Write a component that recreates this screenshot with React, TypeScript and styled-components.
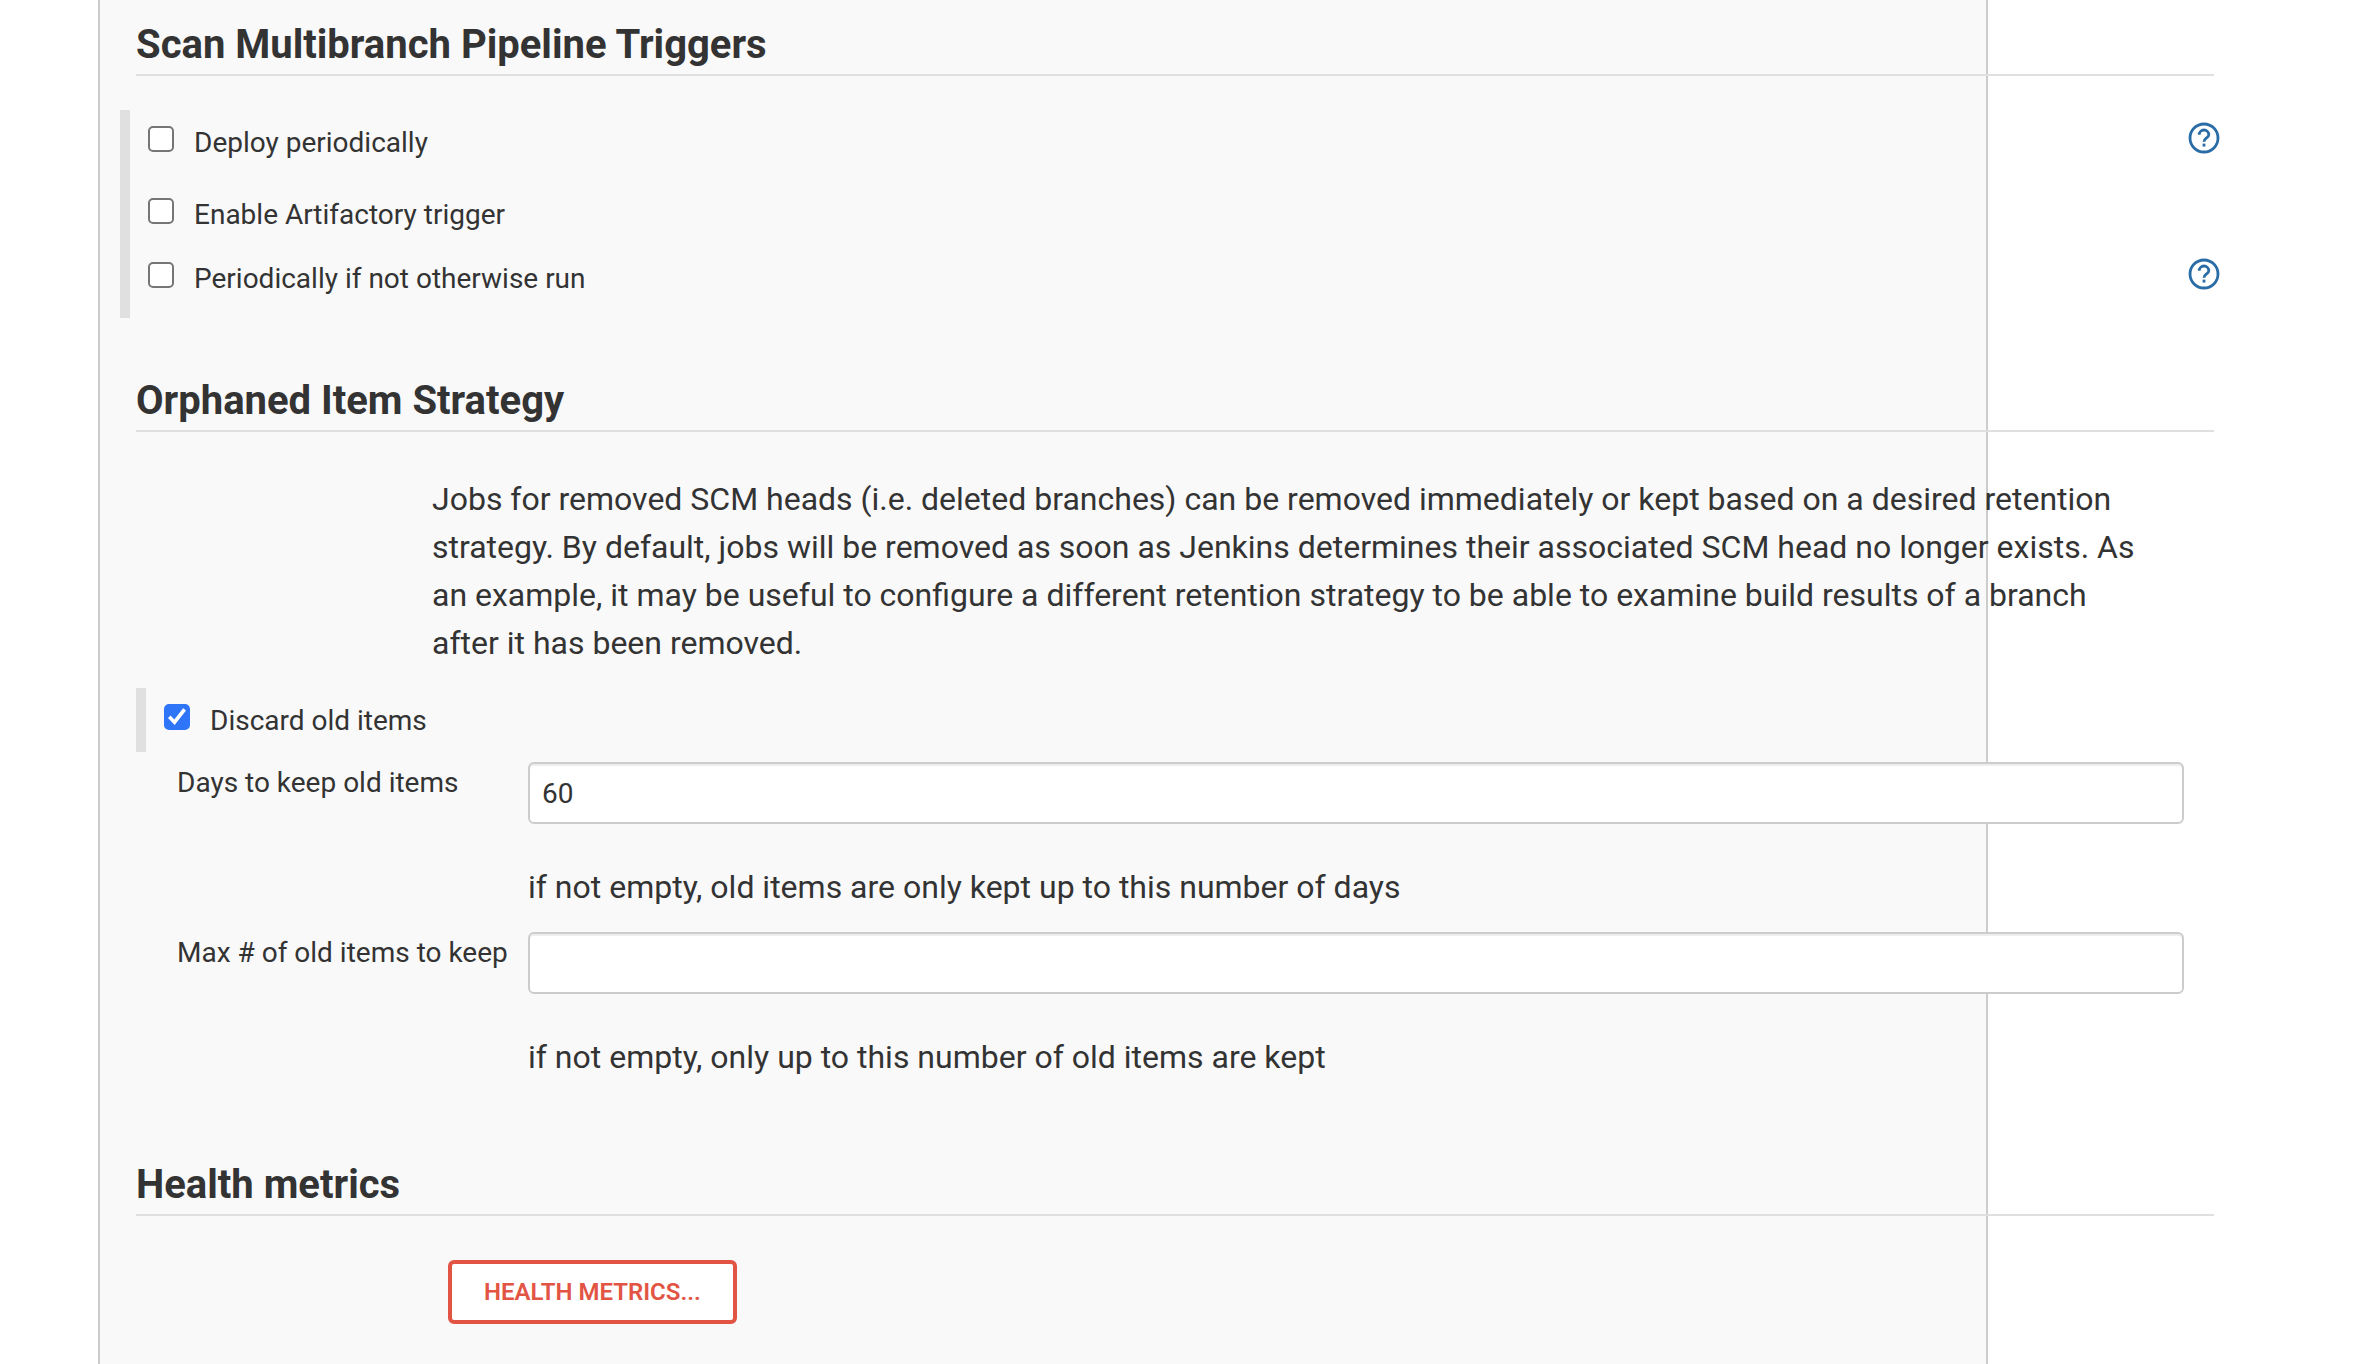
import React, { useId } from "react";
import styled, { createGlobalStyle } from "styled-components";

const GlobalStyle = createGlobalStyle`
  *, *::before, *::after { box-sizing: border-box; }
  body {
    margin: 0;
    background: #fff;
    color: #333;
    font-family: Roboto, "Liberation Sans", sans-serif;
    font-size: 28px;
    line-height: 34px;
  }
`;

const Page = styled.main`
  padding: 0 368px 0 98px;
`;

const Panel = styled.div`
  min-height: 100vh;
  padding: 21px 0 40px 36px;
  background: #f9f9f9;
  border: solid #ccc;
  border-width: 0 2px;
`;

/* The form is wider than its panel and runs past the right border. */
const Form = styled.form`
  margin-right: -228px;
`;

const Section = styled.section<{ $gap?: number }>`
  margin-bottom: ${(p) => p.$gap ?? 0}px;
`;

const Heading = styled.h2`
  margin: 0;
  padding-bottom: 5px;
  border-bottom: 2px solid #e0e0e0;
  font-size: 40px;
  font-weight: 700;
  line-height: 48px;
`;

const Group = styled.div<{ $outdent?: boolean }>`
  margin-top: ${(p) => (p.$outdent ? 34 : 21)}px;
  margin-left: ${(p) => (p.$outdent ? -16 : 0)}px;
  margin-right: -6px;
  padding-left: 18px;
  border-left: 10px solid #e0e0e0;
`;

const Row = styled.div<{ $tall?: boolean }>`
  display: flex;
  justify-content: space-between;
  align-items: flex-start;
  height: ${(p) => (p.$tall ? 72 : 64)}px;
  padding-top: 16px;
`;

const CheckLabel = styled.label`
  display: flex;
  align-items: flex-start;
  gap: 20px;
`;

const Checkbox = styled.input`
  appearance: none;
  display: grid;
  place-items: center;
  width: 26px;
  height: 26px;
  margin: 0;
  border: 2px solid #767676;
  border-radius: 5px;
  background: #fff;

  &:checked {
    border-color: #2f75f8;
    background: #2f75f8;
  }

  &:checked::before {
    content: "";
    width: 18px;
    height: 18px;
    background: #fff;
    clip-path: polygon(0 56%, 14% 42%, 35% 64%, 84% 2%, 100% 14%, 37% 94%);
  }
`;

const HelpButton = styled.button`
  display: block;
  margin: -4px 0 0;
  padding: 0;
  border: 0;
  background: none;
  color: #2a6ca6;
  cursor: pointer;

  svg { display: block; }
`;

const Description = styled.p`
  margin: 43px 64px 0 296px;
  font-size: 32px;
  line-height: 48px;
`;

const Fields = styled.div`
  display: grid;
  gap: 21px;
  margin: 10px 30px 0 41px;
`;

const FieldRow = styled.div`
  display: grid;
  grid-template-columns: 351px 1fr;
`;

const FieldLabel = styled.label`
  padding-top: 4px;
`;

const TextInput = styled.input`
  display: block;
  width: 100%;
  height: 62px;
  padding: 0 12px;
  border: 2px solid #ccc;
  border-radius: 6px;
  background: #fff;
  box-shadow: inset 0 2px 0 #eee;
  color: #333;
  font: inherit;
`;

const FieldHint = styled.p`
  margin: 39px 0 0;
  font-size: 32px;
  line-height: 48px;
`;

const OutlineButton = styled.button`
  display: block;
  height: 64px;
  margin: 44px 0 0 312px;
  padding: 0 32px;
  border: 4px solid #e25443;
  border-radius: 6px;
  background: #fff;
  color: #e25443;
  font: 600 24px/32px Roboto, "Liberation Sans", sans-serif;
  text-transform: uppercase;
  cursor: pointer;
`;

function Help({ topic }: { topic: string }) {
  return (
    <HelpButton type="button" aria-label={`Help for ${topic}`}>
      <svg width="32" height="32" viewBox="0 0 32 32" fill="none" stroke="currentColor" strokeWidth="2.8">
        <circle cx="16" cy="16" r="14" />
        <path d="M11.2 12.8a4.8 4.8 0 0 1 9.6 0c0 3.1-4.8 3.3-4.8 6.9" />
        <path d="M16 21.6v3" />
      </svg>
    </HelpButton>
  );
}

function CheckRow({ label, checked, help }: { label: string; checked?: boolean; help?: boolean }) {
  return (
    <Row $tall={help}>
      <CheckLabel>
        <Checkbox type="checkbox" defaultChecked={checked} />
        {label}
      </CheckLabel>
      {help && <Help topic={label} />}
    </Row>
  );
}

function Field({ label, value, hint }: { label: string; value?: string; hint: string }) {
  const id = useId();
  return (
    <FieldRow>
      <FieldLabel htmlFor={id}>{label}</FieldLabel>
      <div>
        <TextInput id={id} type="text" defaultValue={value} />
        <FieldHint>{hint}</FieldHint>
      </div>
    </FieldRow>
  );
}

export default function App() {
  return (
    <>
      <GlobalStyle />
      <Page>
        <Panel>
          <Form onSubmit={(e) => e.preventDefault()}>
            <Section $gap={59}>
              <Heading>Scan Multibranch Pipeline Triggers</Heading>
              <Group $outdent>
                <CheckRow label="Deploy periodically" help />
                <CheckRow label="Enable Artifactory trigger" />
                <CheckRow label="Periodically if not otherwise run" help />
              </Group>
            </Section>
            <Section $gap={80}>
              <Heading>Orphaned Item Strategy</Heading>
              <Description>
                Jobs for removed SCM heads (i.e. deleted branches) can be removed immediately or kept based on a
                desired retention strategy. By default, jobs will be removed as soon as Jenkins determines their
                associated SCM head no longer exists. As an example, it may be useful to configure a different
                retention strategy to be able to examine build results of a branch after it has been removed.
              </Description>
              <Group>
                <CheckRow label="Discard old items" checked />
              </Group>
              <Fields>
                <Field
                  label="Days to keep old items"
                  value="60"
                  hint="if not empty, old items are only kept up to this number of days"
                />
                <Field
                  label="Max # of old items to keep"
                  hint="if not empty, only up to this number of old items are kept"
                />
              </Fields>
            </Section>
            <Section>
              <Heading>Health metrics</Heading>
              <OutlineButton type="button">Health metrics...</OutlineButton>
            </Section>
          </Form>
        </Panel>
      </Page>
    </>
  );
}
